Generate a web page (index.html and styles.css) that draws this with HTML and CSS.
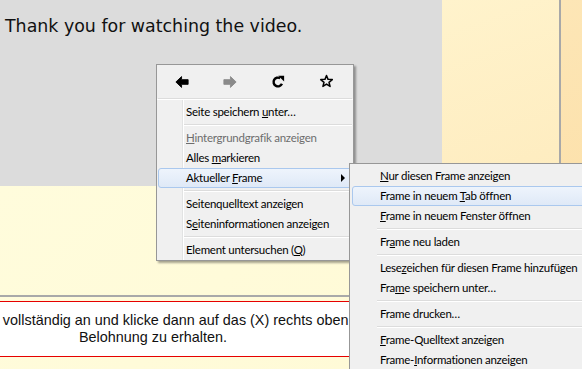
FILE: index.html
```html
<!DOCTYPE html>
<html lang="de">
<head>
  <meta charset="UTF-8" />
  <meta name="viewport" content="width=device-width, initial-scale=1.0" />
  <title>Video</title>
  <link rel="stylesheet" href="styles.css">
</head>
<body>
  <div class="page">
    <div class="left">
      <div class="player">
        <p class="thanks">Thank you for watching the video.</p>
      </div>
      <div class="paper">
        <div class="rule"></div>
        <div class="notice">
          Schau dir das Video vollständig an und klicke dann auf das (X) rechts oben, um deine<br>
          Belohnung zu erhalten.
        </div>
      </div>
    </div>
    <div class="side">
      <div class="side-a"></div>
      <div class="side-line"></div>
      <div class="side-b"></div>
    </div>
  </div>

  <!-- Kontextmenü -->
  <div class="menu main-menu">
    <div class="nav-row">
      <span class="nav-btn">
        <svg width="14" height="14" viewBox="0 0 16 16"><path d="M1 8 L7.5 1.8 L7.5 5.3 L15 5.3 L15 10.7 L7.5 10.7 L7.5 14.2 Z" fill="#000" stroke="#000" stroke-width="1" stroke-linejoin="round"/></svg>
      </span>
      <span class="nav-btn">
        <svg width="14" height="14" viewBox="0 0 16 16"><path d="M15 8 L8.5 1.8 L8.5 5.3 L1 5.3 L1 10.7 L8.5 10.7 L8.5 14.2 Z" fill="#8a8a8a" stroke="#8a8a8a" stroke-width="1" stroke-linejoin="round"/></svg>
      </span>
      <span class="nav-btn">
        <svg width="14" height="14" viewBox="0 0 16 16"><path d="M12.5 10.1 A5 5 0 1 1 10.5 3.7" fill="none" stroke="#000" stroke-width="2.8"/><polygon points="8.3,0.8 15,0.8 15,7.5" fill="#000"/></svg>
      </span>
      <span class="nav-btn">
        <svg width="15" height="15" viewBox="0 0 16 16"><polygon points="8,1.5 9.65,5.73 14.18,5.99 10.66,8.87 11.82,13.26 8,10.8 4.18,13.26 5.34,8.87 1.82,5.99 6.35,5.73" fill="none" stroke="#000" stroke-width="1.6" stroke-linejoin="round"/></svg>
      </span>
    </div>
    <div class="menu-list gutter">
      <div class="item">Seite speichern <u>u</u>nter…</div>
      <div class="sep"></div>
      <div class="item disabled"><u>H</u>intergrundgrafik anzeigen</div>
      <div class="item">Alles <u>m</u>arkieren</div>
      <div class="item active has-sub">Aktueller <u>F</u>rame</div>
      <div class="sep"></div>
      <div class="item">Seitenquelltext anzeigen</div>
      <div class="item">S<u>e</u>iteninformationen anzeigen</div>
      <div class="sep"></div>
      <div class="item">Element untersuchen (<u>Q</u>)</div>
    </div>
  </div>

  <div class="menu sub-menu">
    <div class="menu-list">
      <div class="item"><u>N</u>ur diesen Frame anzeigen</div>
      <div class="item active">Frame in neuem <u>T</u>ab öffnen</div>
      <div class="item"><u>F</u>rame in neuem Fenster öffnen</div>
      <div class="sep"></div>
      <div class="item">Fr<u>a</u>me neu laden</div>
      <div class="sep"></div>
      <div class="item">Lese<u>z</u>eichen für diesen Frame hinzufügen</div>
      <div class="item">Fra<u>m</u>e speichern unter…</div>
      <div class="sep"></div>
      <div class="item">Frame drucken…</div>
      <div class="sep"></div>
      <div class="item"><u>F</u>rame-Quelltext anzeigen</div>
      <div class="item">Frame-<u>I</u>nformationen anzeigen</div>
    </div>
  </div>
</body>
</html>
```

FILE: styles.css
```css
body {
  margin: 0;
  overflow: hidden;
  font-family: "Liberation Sans", Arial, sans-serif;
  background: #fffbdc;
}
.page {
  display: grid;
  grid-template-columns: 442px 1fr;
  height: 369px;
}
.left {
  overflow: hidden;
}
.player {
  height: 186px;
  background: #dcdcdc;
}
.thanks {
  margin: 0;
  padding: 16px 0 0 5px;
  font-family: "DejaVu Sans", Verdana, sans-serif;
  font-size: 17.4px;
  color: #111;
}
.paper {
  height: 183px;
  padding-top: 109px;
  box-sizing: border-box;
  background: linear-gradient(135deg, #fffcdc, #fffad6);
}
.rule {
  height: 2px;
  background: #a9a9a9;
  margin-bottom: 4px;
}
.notice {
  margin-left: -150px;
  width: 606px;
  height: 44px;
  padding-top: 10px;
  border-top: 1px solid #e60000;
  border-bottom: 1px solid #e60000;
  background: #fff;
  text-align: center;
  text-indent: -20px;
  white-space: nowrap;
  font-size: 14.4px;
  line-height: 17px;
  color: #111;
}
.side {
  display: grid;
  grid-template-columns: 117px 2px 1fr;
}
.side-a {
  background: linear-gradient(160deg, #fff3cc, #fde6b4);
}
.side-line {
  background: #a8a8a8;
}
.side-b {
  background: linear-gradient(160deg, #fde6b6, #fcdda2);
}

/* Menüs */
.menu {
  position: absolute;
  background: #f0f0f0;
  border: 1px solid #979797;
  box-shadow: 2px 2px 2px rgba(0,0,0,0.35);
  font-family: Lato, "Liberation Sans", sans-serif;
  font-size: 11.5px;
  letter-spacing: -0.25px;
  color: #000;
}
.main-menu {
  left: 156px;
  top: 64px;
  width: 196px;
}
.sub-menu {
  left: 349px;
  top: 163px;
  width: 260px;
  padding-top: 2px;
}
.nav-row {
  display: grid;
  grid-template-columns: repeat(4, 48px);
  height: 33px;
  margin: 0 1px;
  border-bottom: 1px solid #dcdcdc;
  align-items: center;
  justify-items: center;
}
.nav-btn {
  display: flex;
}
.main-menu .menu-list {
  padding-top: 2px;
  border-top: 1px solid #fff;
}
.gutter {
  background: linear-gradient(to right, transparent 25px, #e2e3e3 25px, #e2e3e3 26px, #fff 26px, #fff 27px, transparent 27px);
}
.item {
  position: relative;
  height: 18px;
  line-height: 18px;
  padding-left: 27px;
  border: 1px solid transparent;
  border-radius: 3px;
  margin: 0 1px;
  white-space: nowrap;
}
.sub-menu .item {
  margin: 0 2px;
}
.item.disabled {
  color: #6d6d6d;
}
.item.active {
  border-color: #aac8ee;
  background: linear-gradient(#eef4fc, #dfe9f7);
}
.has-sub::after {
  content: "";
  position: absolute;
  right: 6px;
  top: 5px;
  border-left: 4px solid #000;
  border-top: 4px solid transparent;
  border-bottom: 4px solid transparent;
}
.sep {
  margin: 2px 1px 2px 27px;
  border-top: 1px solid #dcdcdc;
  border-bottom: 1px solid #fff;
}
```
